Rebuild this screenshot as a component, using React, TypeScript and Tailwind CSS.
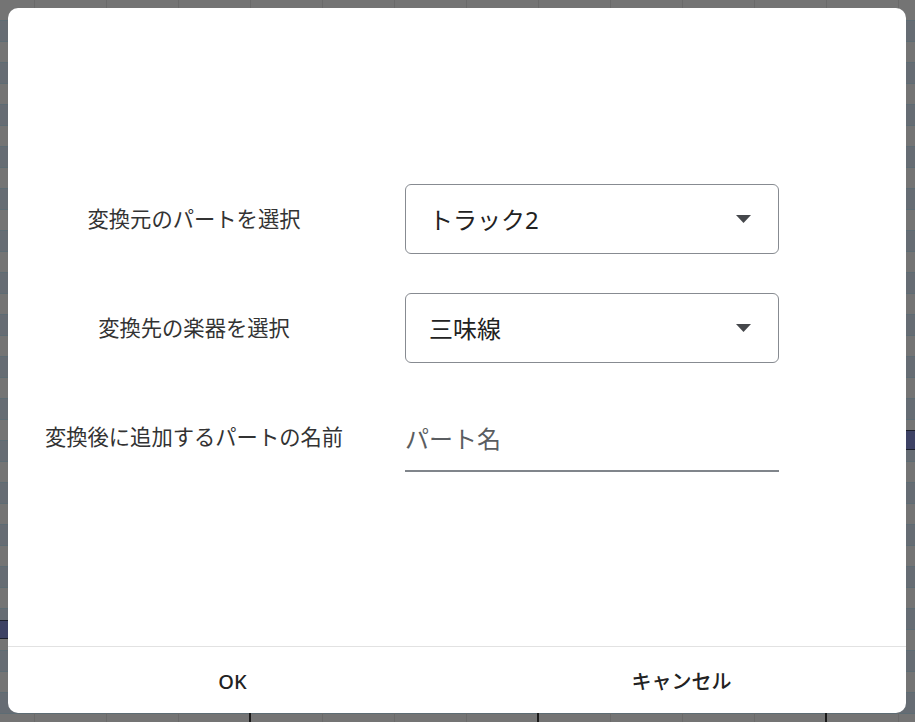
const FONT = {fontFamily: '"Noto Sans", "Noto Sans CJK JP", sans-serif'};

const FIELDS = [
  {id: 'source', label: '変換元のパートを選択', kind: 'select', value: 'トラック2'},
  {id: 'instrument', label: '変換先の楽器を選択', kind: 'select', value: '三味線'},
  {id: 'name', label: '変換後に追加するパートの名前', kind: 'text', value: 'パート名'},
] as const;

function Caret() {
  return (
    <svg width="15" height="8" viewBox="0 0 15 8" className="shrink-0">
      <path d="M0 0 L15 0 L7.5 8 Z" fill="#45474b" />
    </svg>
  );
}

export default function App() {
  return (
    <div
      className="relative w-[915px] h-[722px] overflow-hidden bg-[repeating-linear-gradient(180deg,#747474_0px,#747474_20px,#5d6c74_20px,#5d6c74_21px,#666c73_21px,#666c73_41px,#5d6c74_41px,#5d6c74_42px)]"
      style={FONT}
    >
      {/* grid columns behind the dialog */}
      <div className="absolute inset-0 bg-[repeating-linear-gradient(90deg,transparent_0px,transparent_34px,#6a6a6a_34px,#6a6a6a_35px,transparent_35px,transparent_72px)]" />
      <div className="absolute left-0 right-0 top-[40px] bottom-0 bg-[repeating-linear-gradient(90deg,transparent_0px,transparent_249px,#1a1a1a_249px,#1a1a1a_251px,transparent_251px,transparent_288px)]" />

      {/* notes peeking out */}
      <div className="absolute left-0 top-[620px] w-[10px] h-[19px] bg-[#3d4264] border-y border-[#1c1f2c]" />
      <div className="absolute right-0 top-[430px] w-[12px] h-[20px] bg-[#3d4264] border-y border-[#1c1f2c]" />

      {/* dialog */}
      <div className="absolute left-[8px] top-[8px] w-[898px] h-[705px] bg-white rounded-[10px] flex flex-col overflow-hidden">
        <div className="flex-1 flex flex-col justify-center gap-[39px] pt-[2px]">
          {FIELDS.map((field) => (
            <div key={field.id} className="flex items-center h-[70px]">
              <div className="w-[372px] text-center text-[21.3px] text-[#333]">
                {field.label}
              </div>
              {field.kind === 'select' ? (
                <div className="ml-[25px] w-[374px] h-[70px] border border-[#878b91] rounded-[6px] flex items-center justify-between pl-[23px] pr-[27px]">
                  <span className="text-[24px] text-[#222] pt-[2px]">{field.value}</span>
                  <Caret />
                </div>
              ) : (
                <div className="ml-[25px] w-[374px] h-[70px] border-b-2 border-[#80858b] flex items-center pt-[6px]">
                  <span className="text-[24px] text-[#5a5d61]">{field.value}</span>
                </div>
              )}
            </div>
          ))}
        </div>

        <div className="h-[67px] border-t border-[#e2e2e2] flex">
          <button className="flex-1 flex items-center justify-center pt-[4px] text-[20px] font-medium text-[#222]">
            OK
          </button>
          <button className="flex-1 flex items-center justify-center pt-[4px] text-[20px] font-medium text-[#222]">
            キャンセル
          </button>
        </div>
      </div>
    </div>
  );
}
